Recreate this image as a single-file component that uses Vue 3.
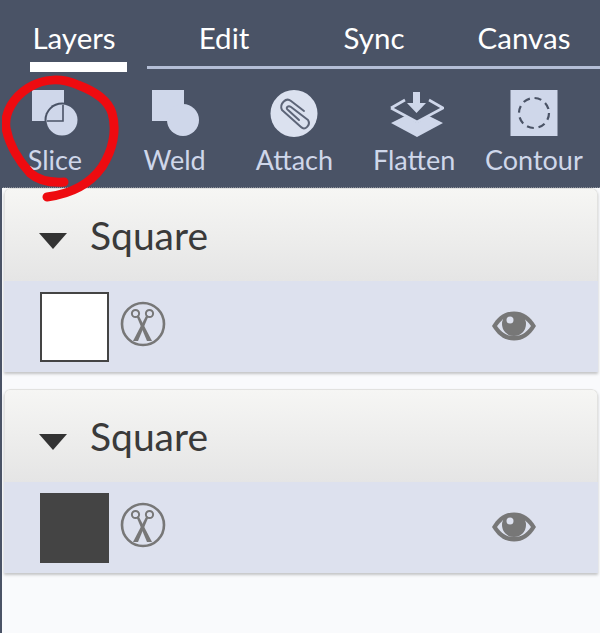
<template>
  <div class="page">
    <header class="toolbar">
      <nav class="tabs">
        <span v-for="tab in tabs" :key="tab" class="tab">{{ tab }}</span>
      </nav>
      <div class="rail">
        <span class="rail-active"></span>
        <span class="rail-line"></span>
      </div>

      <div class="tools">
        <div class="tool">
          <svg class="tool-icon" width="48" height="48" viewBox="0 0 48 48">
            <rect x="1" y="0" width="32" height="31" fill="#cfd7ea" />
            <circle cx="31" cy="30" r="17.5" fill="#4a5366" />
            <circle cx="31" cy="30" r="15.5" fill="#cfd7ea" />
            <path d="M16 31H32V15" fill="none" stroke="#4a5366" stroke-width="1.6" />
          </svg>
          <span>Slice</span>
        </div>
        <div class="tool">
          <svg class="tool-icon" width="48" height="48" viewBox="0 0 48 48">
            <rect x="1" y="0" width="32" height="31" fill="#cfd7ea" />
            <circle cx="32" cy="30" r="16" fill="#cfd7ea" />
          </svg>
          <span>Weld</span>
        </div>
        <div class="tool">
          <svg class="tool-icon" width="48" height="48" viewBox="0 0 48 48">
            <circle cx="24" cy="23.5" r="23.5" fill="#dbe1ef" />
            <path d="M34 21 21 11C16 7 9 14 12 20L31 37C35 41 41 35 38 30L21 17C18 15 15 18 18 20L29 30" fill="none" stroke="#5d6578" stroke-width="2" stroke-linecap="round" stroke-linejoin="round" />
          </svg>
          <span>Attach</span>
        </div>
        <div class="tool">
          <svg class="tool-icon flatten" width="54" height="48" viewBox="0 0 54 48">
            <path d="M1 18 15 10M39 10 53 18 27 32 1 18" fill="none" stroke="#cfd7ea" stroke-width="2.600" />
            <path d="M23 2h7v11h6L26.500 23 17 13h6z" fill="#cfd7ea" />
            <path d="M1 33 15 26 27 33 39 26 53 33 27 47z" fill="#cfd7ea" />
          </svg>
          <span>Flatten</span>
        </div>
        <div class="tool">
          <svg class="tool-icon" width="48" height="48" viewBox="0 0 48 48">
            <rect x="0.500" y="0" width="47" height="46" fill="#cfd7ea" />
            <circle cx="24" cy="23" r="15" fill="none" stroke="#4a5366" stroke-width="2.200" stroke-dasharray="7 4.800" />
          </svg>
          <span>Contour</span>
        </div>
      </div>
    </header>

    <section v-for="layer in layers" :key="layer.id" class="layer-card">
      <div class="layer-head">
        <span class="caret"></span>
        <h3>Square</h3>
      </div>
      <div class="layer-row">
        <span class="thumb" :class="layer.fill"></span>
        <svg class="scissors" width="46" height="46" viewBox="0 0 46 46">
          <circle cx="23" cy="23" r="21" fill="none" stroke="#777" stroke-width="2.600" />
          <circle cx="15.500" cy="12.500" r="3.600" fill="none" stroke="#777" stroke-width="2" />
          <circle cx="29.500" cy="12.500" r="3.600" fill="none" stroke="#777" stroke-width="2" />
          <path d="M16.500 15 18.500 14 32 40 27 40Z" fill="#777" />
          <path d="M28.500 15 26.500 14 13 40 18 40Z" fill="#777" />
        </svg>
        <svg class="eye" width="46" height="32" viewBox="0 0 46 32">
          <path d="M1 16C7 6 14 1.500 23 1.500S39 6 45 16C39 26 32 30.500 23 30.500S7 26 1 16Z" fill="#777" />
          <path d="M6 16C11 9 16 6 23 6S35 9 40 16C35 23 30 26 23 26S11 23 6 16Z" fill="#dde1ee" />
          <circle cx="23" cy="14" r="12" fill="#777" />
          <circle cx="19" cy="10" r="3.500" fill="#dde1ee" />
        </svg>
      </div>
    </section>

    <!-- red marker scribble round Slice -->
    <svg class="scribble" width="130" height="205" viewBox="0 0 130 205">
      <path d="M64 182C50 183 38 180 30 173 20 162 9 145 6 128 4 112 14 97 28 88 44 78 62 78 78 85 94 91 108 100 112 113 117 130 113 150 102 167 90 184 70 194 47 197" fill="none" stroke="#ee0b10" stroke-width="9" stroke-linecap="round" stroke-linejoin="round" />
    </svg>
  </div>
</template>

<script setup>
const tabs = ['Layers', 'Edit', 'Sync', 'Canvas'];

const layers = [
  { id: 1, fill: 'white' },
  { id: 2, fill: 'dark' },
];
</script>

<style>
html,
body {
  margin: 0;
  background: #f9fafc;
}
</style>

<style scoped>
.page {
  position: relative;
  width: 600px;
  height: 633px;
  overflow: hidden;
  box-sizing: border-box;
  border-left: 2px solid #4a5366;
  font-family: Lato, "Open Sans", sans-serif;
}

/* Toolbar */
.toolbar {
  height: 187px;
  margin-left: -2px;
  background: #4a5366;
  border-bottom: 1px dotted #8a8f99;
  overflow: hidden;
}

.tabs {
  display: grid;
  grid-template-columns: repeat(4, 150px);
  margin-left: -1px;
  padding-top: 20px;
}

.tab {
  color: #fff;
  font-size: 29.500px;
  line-height: 35px;
  text-align: center;
}

.rail {
  display: flex;
  align-items: flex-end;
  height: 16px;
  padding-left: 30px;
}

.rail-active {
  width: 97px;
  height: 10px;
  margin-bottom: -1px;
  background: #fff;
}

.rail-line {
  flex: 1;
  height: 3px;
  margin-left: 20px;
  margin-bottom: 2px;
  background: #b4bed6;
}

.tools {
  display: grid;
  grid-template-columns: repeat(5, 119.75px);
  margin-left: -5px;
  padding-top: 19px;
}

.tool {
  display: flex;
  flex-direction: column;
  align-items: center;
  color: #cfd7ea;
  font-size: 27px;
  line-height: 30px;
}

.tool-icon {
  display: block;
  margin-bottom: 7px;
}

.tool-icon.flatten {
  margin-left: 5px;
}

/* Layer cards */
.layer-card {
  margin: 0 2px 17px 2px;
  border-radius: 6px 6px 0 0;
  box-shadow: 0 2px 3px rgba(0, 0, 0, 0.22);
  overflow: hidden;
}

.layer-head {
  display: flex;
  align-items: center;
  gap: 23px;
  height: 93px;
  box-sizing: border-box;
  padding-left: 34px;
  border: 1px solid #e2e2e0;
  border-bottom: none;
  border-radius: 6px 6px 0 0;
  background: linear-gradient(#f6f6f4, #e5e5e5);
}

.layer-head h3 {
  margin: 0;
  color: #3a3a3a;
  font-size: 39px;
  font-weight: 400;
  line-height: 44px;
}

.caret {
  width: 0;
  height: 0;
  border-left: 14px solid transparent;
  border-right: 14px solid transparent;
  border-top: 16px solid #333;
  margin-top: 12px;
}

.layer-row {
  display: flex;
  align-items: center;
  height: 91px;
  padding-left: 36px;
  padding-right: 61px;
  background: #dde1ee;
}

.thumb {
  width: 69px;
  height: 70px;
  box-sizing: border-box;
}

.thumb.white {
  background: #fff;
  border: 2px solid #444;
}

.thumb.dark {
  background: #444;
}

.scissors {
  margin-left: 11px;
  margin-top: -6px;
}

.eye {
  margin-left: auto;
  margin-top: -2px;
}

.scribble {
  position: absolute;
  left: -2px;
  top: 0;
  pointer-events: none;
}
</style>
